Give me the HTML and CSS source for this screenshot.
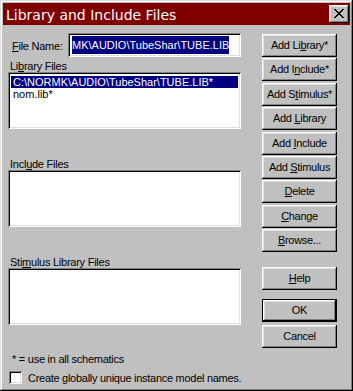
FILE: index.html
```html
<!DOCTYPE html>
<html>
<head>
<meta charset="utf-8">
<title>Library and Include Files</title>
<link rel="stylesheet" href="styles.css">
</head>
<body>
<div class="window">
  <div class="titlebar">
    <span class="title">Library and Include Files</span>
    <button class="close" aria-label="Close">
      <svg width="10" height="9" viewBox="0 0 10 9" shape-rendering="crispEdges">
        <path d="M0 0h2v1h1v1h1v1h2v-1h1v-1h1v-1h2v1h-1v1h-1v1h-1v1h-1v1h1v1h1v1h1v1h1v1h-2v-1h-1v-1h-1v-1h-2v1h-1v1h-1v1h-2v-1h1v-1h1v-1h1v-1h1v-1h-1v-1h-1v-1h-1z" fill="#000"/>
      </svg>
    </button>
  </div>
  <div class="main">
    <div class="left">
      <div class="file-row">
        <span class="file-label"><u>F</u>ile Name:</span>
        <div class="field"><span class="sel">MK\AUDIO\TubeShar\TUBE.LIB</span></div>
      </div>
      <div class="group-label">Li<u>b</u>rary Files</div>
      <div class="listbox">
        <div class="item selected">C:\NORMK\AUDIO\TubeShar\TUBE.LIB*</div>
        <div class="item">nom.lib*</div>
      </div>
      <div class="group-label spaced">Incl<u>u</u>de Files</div>
      <div class="listbox"></div>
      <div class="group-label spaced">Sti<u>m</u>ulus Library Files</div>
      <div class="listbox"></div>
      <div class="note">* = use in all schematics</div>
      <label class="check-row"><span class="checkbox"></span><span class="check-text">Create globally unique instance model names.</span></label>
    </div>
    <div class="right">
      <div class="btn-stack">
        <button class="btn">Add Li<u>b</u>rary*</button>
        <button class="btn">Add I<u>n</u>clude*</button>
        <button class="btn">Add S<u>t</u>imulus*</button>
        <button class="btn">Add <u>L</u>ibrary</button>
        <button class="btn">Add <u>I</u>nclude</button>
        <button class="btn">Add <u>S</u>timulus</button>
        <button class="btn"><u>D</u>elete</button>
        <button class="btn"><u>C</u>hange</button>
        <button class="btn"><u>B</u>rowse...</button>
      </div>
      <button class="btn help"><u>H</u>elp</button>
      <button class="btn default">OK</button>
      <button class="btn cancel">Cancel</button>
    </div>
  </div>
</div>
</body>
</html>
```
FILE: styles.css
```css
html, body {
  margin: 0;
  padding: 0;
  background: #c0c0c0;
}

.window {
  width: 353px;
  height: 391px;
  box-sizing: border-box;
  padding: 3px;
  background: #c0c0c0;
  box-shadow: inset -1px -1px #000, inset 1px 1px #dfdfdf, inset -2px -2px #808080, inset 2px 2px #fff;
  font-family: "Liberation Sans", Arial, sans-serif;
  font-size: 11px;
  letter-spacing: -0.25px;
  color: #000;
}

.titlebar {
  height: 22px;
  background: #800000;
  display: flex;
  align-items: center;
  justify-content: space-between;
  padding: 0 1px 0 3px;
}

.title {
  color: #fff;
  font-family: "DejaVu Sans", Verdana, sans-serif;
  font-size: 14px;
  letter-spacing: 0;
  line-height: 22px;
  padding-top: 1px;
}

.close {
  width: 20px;
  height: 18px;
  padding: 0;
  border: none;
  background: #c0c0c0;
  box-shadow: inset -1px -1px #000, inset 1px 1px #fff, inset -2px -2px #808080, inset 2px 2px #dfdfdf;
  display: flex;
  align-items: center;
  justify-content: center;
}

.close svg {
  display: block;
  margin-top: -1px;
}

.main {
  display: flex;
  padding-left: 5px;
  gap: 21px;
}

.left {
  width: 233px;
  display: flex;
  flex-direction: column;
}

.file-row {
  margin-top: 8px;
  height: 24px;
  display: flex;
  align-items: center;
}

.file-label {
  width: 60px;
  box-sizing: border-box;
  padding-left: 4px;
  padding-top: 2px;
}

.field {
  width: 173px;
  height: 24px;
  box-sizing: border-box;
  background: #fff;
  box-shadow: inset 1px 1px #808080, inset -1px -1px #fff, inset 2px 2px #000, inset -2px -2px #dfdfdf;
  padding: 3px 2px 0 4px;
  overflow: hidden;
  white-space: nowrap;
  letter-spacing: 0;
}

.sel {
  display: inline-block;
  background: #000080;
  color: #fff;
  height: 18px;
  line-height: 19px;
}

.group-label {
  margin-top: 3px;
  padding-left: 2px;
  line-height: 12px;
  height: 12px;
}

.group-label.spaced {
  margin-top: 29px;
}

.listbox {
  height: 57px;
  box-sizing: border-box;
  background: #fff;
  box-shadow: inset 1px 1px #808080, inset -1px -1px #fff, inset 2px 2px #000, inset -2px -2px #dfdfdf;
  padding: 4px 3px 2px 3px;
}

.item {
  line-height: 12px;
  height: 12px;
  padding-left: 2px;
  white-space: nowrap;
  letter-spacing: 0;
}

.item.selected {
  background: #000080;
  color: #fff;
}

.note {
  margin-top: 28px;
  padding-left: 4px;
  line-height: 12px;
}

.check-row {
  margin-top: 6px;
  display: flex;
  align-items: center;
  height: 13px;
  padding-left: 1px;
  white-space: nowrap;
}

.checkbox {
  width: 13px;
  height: 13px;
  box-sizing: border-box;
  background: #fff;
  box-shadow: inset 1px 1px #808080, inset -1px -1px #fff, inset 2px 2px #000, inset -2px -2px #dfdfdf;
  flex: none;
}

.check-text {
  margin-left: 6px;
  line-height: 13px;
  padding-top: 1px;
  flex: none;
  letter-spacing: -0.28px;
}

.right {
  width: 75px;
  display: flex;
  flex-direction: column;
}

.btn-stack {
  margin-top: 9px;
  display: flex;
  flex-direction: column;
  gap: 1.375px;
}

.btn {
  width: 75px;
  height: 23px;
  padding: 0;
  border: none;
  background: #c0c0c0;
  box-shadow: inset -1px -1px #000, inset 1px 1px #fff, inset -2px -2px #808080, inset 2px 2px #dfdfdf;
  font-family: "Liberation Sans", Arial, sans-serif;
  font-size: 11px;
  letter-spacing: -0.3px;
  color: #000;
  text-align: center;
  line-height: 21px;
}

.btn.help {
  margin-top: 15px;
}

.btn.default {
  margin-top: 9px;
  box-shadow: inset 0 0 0 1px #000, inset -2px -2px #000, inset 2px 2px #fff, inset -3px -3px #808080, inset 3px 3px #dfdfdf;
}

.btn.cancel {
  margin-top: 3px;
}
```
